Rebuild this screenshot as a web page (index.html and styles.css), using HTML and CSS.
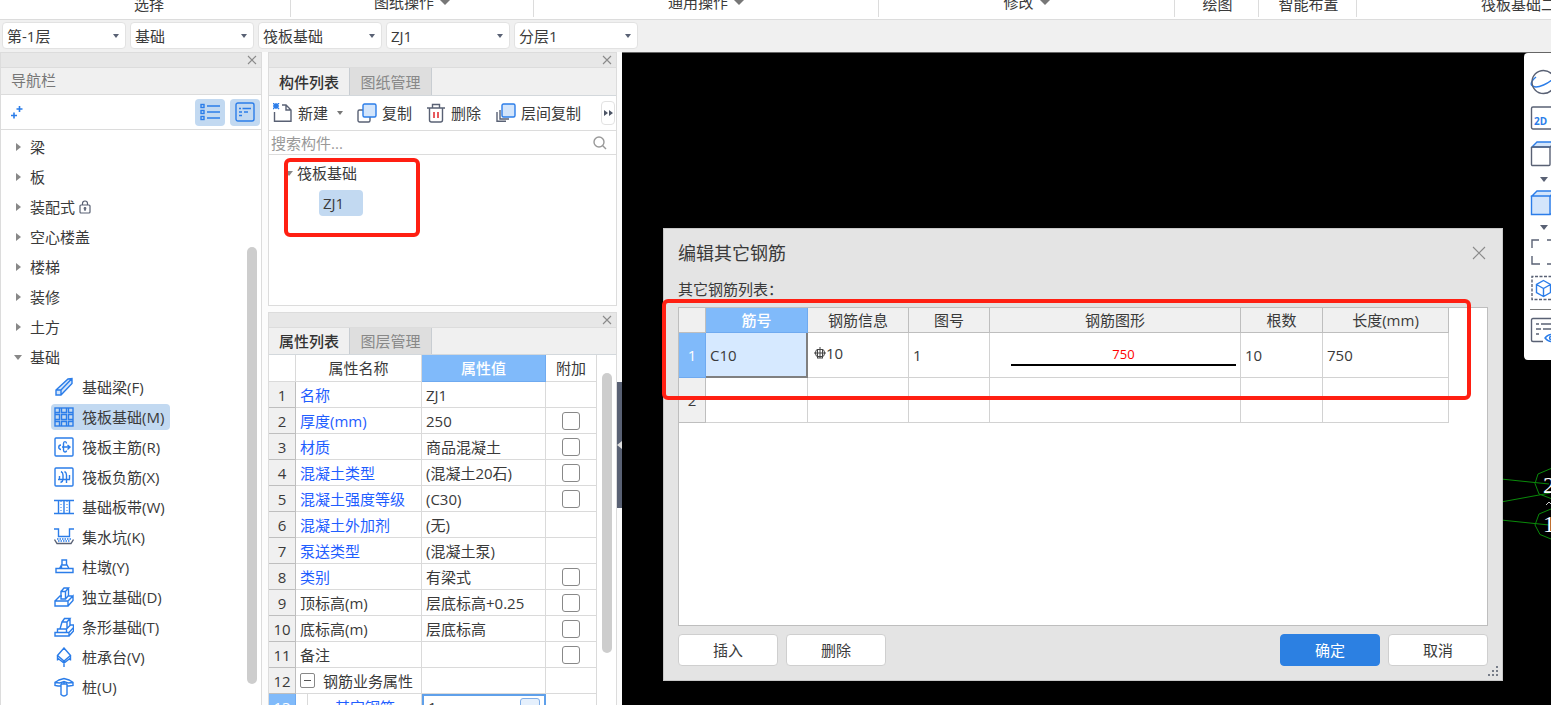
FILE: index.html
```html
<!DOCTYPE html>
<html lang="zh-CN">
<head>
<meta charset="utf-8">
<title>编辑其它钢筋</title>
<link rel="stylesheet" href="styles.css">
</head>
<body>
<header class="ribbon">
  <span class="group g-select">选择</span>
  <span class="group g-sheet up">图纸操作<i class="tri"></i></span>
  <span class="group g-common up">通用操作<i class="tri"></i></span>
  <span class="group g-modify up">修改<i class="tri"></i></span>
  <span class="group g-draw">绘图</span>
  <span class="group g-smart">智能布置</span>
  <span class="group g-last">筏板基础二次编辑</span>
</header>

<div class="context">
  <span class="combo"><select aria-label="楼层"><option>第-1层</option></select></span>
  <span class="combo"><select aria-label="类型"><option>基础</option></select></span>
  <span class="combo"><select aria-label="构件类型"><option>筏板基础</option></select></span>
  <span class="combo"><select aria-label="构件"><option>ZJ1</option></select></span>
  <span class="combo"><select aria-label="分层"><option>分层1</option></select></span>
</div>

<main class="work">
  <aside class="panel nav">
    <div class="strip"><button class="x" aria-label="关闭导航栏"><svg width="10" height="10" viewBox="0 0 10 10"><path d="M1 1l8 8M9 1l-8 8"/></svg></button></div>
    <h2 class="nav-title">导航栏</h2>
    <div class="nav-tools">
      <button class="plain" aria-label="添加"><svg width="12" height="14" viewBox="0 0 12 14" class="ic"><path stroke-width="1.6" d="M8.500 1v6M5.500 4h6M3 7.500v6M0 10.500h6"/></svg></button>
      <span class="grow"></span>
      <button class="toggle" aria-label="列表"><svg width="20" height="18" viewBox="0 0 20 18" class="ic"><path d="M7 3h13M7 9h13M7 15h13"/><rect x="1" y="1.500" width="3" height="3"/><rect x="1" y="7.500" width="3" height="3"/><rect x="1" y="13.500" width="3" height="3"/></svg></button>
      <button class="toggle" aria-label="详情"><svg width="20" height="20" viewBox="0 0 20 20" class="ic"><rect x="1" y="1" width="18" height="18" rx="2"/><path d="M4 6.500h2M7.500 6.500H16M4 10h3M9 10h4M4 13.500h3"/></svg></button>
    </div>
    <ul class="tree">
      <li><button class="node"><i class="caret"></i>梁</button></li>
      <li><button class="node"><i class="caret"></i>板</button></li>
      <li><button class="node"><i class="caret"></i>装配式<svg class="lock" width="12" height="14" viewBox="0 0 12 14"><rect x="1" y="5" width="10" height="8" rx="1"/><path d="M3.500 5V3.500a2.500 2.500 0 0 1 5 0V5M6 9v2"/><circle cx="6" cy="8.500" r=".8"/></svg></button></li>
      <li><button class="node"><i class="caret"></i>空心楼盖</button></li>
      <li><button class="node"><i class="caret"></i>楼梯</button></li>
      <li><button class="node"><i class="caret"></i>装修</button></li>
      <li><button class="node"><i class="caret"></i>土方</button></li>
      <li><button class="node"><i class="caret open"></i>基础</button>
        <ul class="leaves">
          <li><button class="leaf"><svg class="ic" width="20" height="20" viewBox="0 0 20 20"><path class="tint" d="M2 13L14 2l4-.5v5L7 18H2zM2 13h5v5M7 13L18 1.500"/></svg>基础梁(F)</button></li>
          <li><button class="leaf on"><svg class="ic" width="20" height="20" viewBox="0 0 20 20"><rect x="1" y="1" width="18" height="18"/><path d="M1 5.500h4.500V1M7.500 1v4.500h5V1M14.500 1v4.500H19M1 7.500h4.500v5H1M7.500 7.500h5v5h-5zM19 7.500h-4.500v5H19M1 14.500h4.500V19M7.500 19v-4.500h5V19M14.500 19v-4.500H19"/></svg>筏板基础(M)</button></li>
          <li><button class="leaf"><svg class="ic" width="20" height="20" viewBox="0 0 20 20"><rect x="1" y="1" width="18" height="18" rx="1"/><path d="M8 10h8M7 8a2.200 2.200 0 1 0 0 4.500M13.500 8l2.500 2-2.500 2.500M12.500 6.500c0-2.500-3-2.500-3 0V13c0 2.500 3 2.500 3 .5"/></svg>筏板主筋(R)</button></li>
          <li><button class="leaf"><svg class="ic" width="20" height="20" viewBox="0 0 20 20"><rect x="1" y="1" width="18" height="18" rx="1"/><path d="M4 12.500h12M7 4.500q2 1 2 3.500v4.500q0 2-2.500 3M10.500 4.500q2 1 2 3.500v8M5.500 9v3.500M15.500 8v4.500"/></svg>筏板负筋(X)</button></li>
          <li><button class="leaf"><svg class="ic" width="20" height="20" viewBox="0 0 20 20"><path d="M0 3.500h20M0 16.500h20M4.500 3.500v13M10 3.500v13M15.500 3.500v13"/><path d="M7 4v12M13 4v12" stroke-width="1" stroke-dasharray="1 2"/></svg>基础板带(W)</button></li>
          <li><button class="leaf"><svg class="ic" width="20" height="20" viewBox="0 0 20 20"><path d="M0 2h4.500v7.500h11V2H20"/><path d="M3 12h14M4 14h12" stroke-dasharray="1.500 1"/><path d="M.5 12.500L3 16.500h14l2.500-4" stroke="#596174"/></svg>集水坑(K)</button></li>
          <li><button class="leaf"><svg class="ic" width="20" height="20" viewBox="0 0 20 20"><path d="M2 11.500h17v4H2zM5.500 11.500L7.500 8h5.500l2 3.500M8 8V3h4.500v5M7.500 11V9"/></svg>柱墩(Y)</button></li>
          <li><button class="leaf"><svg class="ic" width="20" height="20" viewBox="0 0 20 20"><path d="M1 14h13v5H1zM14 14l5-5v4.500L14 19M1 14l5-5h2M14.500 9H19M7 12V4.500h4.500V12zM7 4.500L10 1h4.500l-3 3.500M14.500 1v7.500L11.500 12"/></svg>独立基础(D)</button></li>
          <li><button class="leaf"><svg class="ic" width="20" height="20" viewBox="0 0 20 20"><path d="M1 15.500h14V19H1zM15 15.500l4.500-5V14L15 19M3.500 15.500V12h9v3.500M12.500 12l4-4h3v2.500M6 12l2-7h5v7M8 5l2.500-3.500H16L13 5M16 1.500V8.500"/></svg>条形基础(T)</button></li>
          <li><button class="leaf"><svg class="ic" width="20" height="20" viewBox="0 0 20 20"><path d="M10 1L3.500 8.500 10 14l6.500-5.500zM3.500 8.500v5M16.500 8.500v5M3.500 11L10 16l6.500-5M10 14v6"/></svg>桩承台(V)</button></li>
          <li><button class="leaf"><svg class="ic" width="20" height="20" viewBox="0 0 20 20"><path d="M1 5.500L5 3l5-1.500L15 3l4 2.500v3L15 9h-2M7 9H4L1 8.500v-3l5 .5 4-1.500 4 1.500 5-.5M7 7v10.500q3 3 6 0V7M10 5v2M7 7h6"/></svg>桩(U)</button></li>
        </ul>
      </li>
    </ul>
    <span class="thumb nav-thumb"></span>
  </aside>

  <div class="middle">
    <section class="panel list-panel">
      <div class="strip"><button class="x" aria-label="关闭构件列表"><svg width="10" height="10" viewBox="0 0 10 10"><path d="M1 1l8 8M9 1l-8 8"/></svg></button></div>
      <div class="tabs"><button class="tab active">构件列表</button><button class="tab">图纸管理</button></div>
      <div class="tools">
        <button class="tool t-new"><svg width="20" height="20" viewBox="0 0 20 20"><path class="ink" d="M1.500 9v9.300h16.500V7l-5-5H9M13 2v5h5"/><path class="ic" d="M0 0l6 6M6 0L0 6M3 0v6M0 3h6"/></svg>新建<i class="tri small"></i></button>
        <button class="tool t-copy"><svg width="20" height="20" viewBox="0 0 20 20"><rect class="ink" x="1" y="7" width="12" height="12" rx="1.500"/><rect class="ic tint" x="6" y="1" width="13" height="13" rx="1.500"/></svg>复制</button>
        <button class="tool t-delete"><svg width="18" height="20" viewBox="0 0 18 20"><path class="ink" d="M0 5h18M2.500 5v12q0 2 2 2h9q2 0 2-2V5M5.500 5V1.500h7V5"/><path d="M7 9v6M11 9v6" stroke="#e0242a" stroke-width="1.500"/></svg>删除</button>
        <button class="tool t-floor"><svg width="20" height="20" viewBox="0 0 20 20"><path class="ink" d="M4 7v9h9M1 9v9.300h9"/><rect class="ic tint" x="6" y="1" width="13" height="13" rx="1.500"/></svg>层间复制</button>
        <button class="more" aria-label="更多"><svg width="9" height="6" viewBox="0 0 9 6"><path d="M0 0l4 3-4 3zM5 0l4 3-4 3z" fill="#4d5566"/></svg></button>
      </div>
      <label class="search"><input type="text" placeholder="搜索构件..." aria-label="搜索构件"><svg width="14" height="14" viewBox="0 0 14 14"><circle cx="6" cy="6" r="5"/><path d="M9.500 9.500L13 13"/></svg></label>
      <ul class="parts">
        <li><button class="part"><i class="caret open tiny"></i>筏板基础</button></li>
        <li><button class="part chosen">ZJ1</button></li>
      </ul>
      <span class="mark mark-part"></span>
    </section>

    <section class="panel prop-panel">
      <div class="strip"><button class="x" aria-label="关闭属性列表"><svg width="10" height="10" viewBox="0 0 10 10"><path d="M1 1l8 8M9 1l-8 8"/></svg></button></div>
      <div class="tabs"><button class="tab active">属性列表</button><button class="tab">图层管理</button></div>
      <table class="props">
        <colgroup><col class="p-no"><col class="p-name"><col class="p-value"><col class="p-extra"></colgroup>
        <thead><tr><th></th><th>属性名称</th><th class="hot">属性值</th><th>附加</th></tr></thead>
        <tbody>
          <tr><th>1</th><td class="key">名称</td><td>ZJ1</td><td></td></tr>
          <tr><th>2</th><td class="key">厚度(mm)</td><td>250</td><td class="tick"><input type="checkbox" aria-label="附加 厚度"></td></tr>
          <tr><th>3</th><td class="key">材质</td><td>商品混凝土</td><td class="tick"><input type="checkbox" aria-label="附加 材质"></td></tr>
          <tr><th>4</th><td class="key">混凝土类型</td><td>(混凝土20石)</td><td class="tick"><input type="checkbox" aria-label="附加 混凝土类型"></td></tr>
          <tr><th>5</th><td class="key">混凝土强度等级</td><td>(C30)</td><td class="tick"><input type="checkbox" aria-label="附加 混凝土强度等级"></td></tr>
          <tr><th>6</th><td class="key">混凝土外加剂</td><td>(无)</td><td></td></tr>
          <tr><th>7</th><td class="key">泵送类型</td><td>(混凝土泵)</td><td></td></tr>
          <tr><th>8</th><td class="key">类别</td><td>有梁式</td><td class="tick"><input type="checkbox" aria-label="附加 类别"></td></tr>
          <tr><th>9</th><td>顶标高(m)</td><td>层底标高+0.25</td><td class="tick"><input type="checkbox" aria-label="附加 顶标高"></td></tr>
          <tr><th>10</th><td>底标高(m)</td><td>层底标高</td><td class="tick"><input type="checkbox" aria-label="附加 底标高"></td></tr>
          <tr><th>11</th><td>备注</td><td></td><td class="tick"><input type="checkbox" aria-label="附加 备注"></td></tr>
          <tr><th>12</th><td><span class="fold-row"><button class="fold" aria-label="折叠"></button>钢筋业务属性</span></td><td></td><td></td></tr>
          <tr><th class="hot">13</th><td class="key sub">其它钢筋</td><td class="editing"><span class="edit-row">1<button class="dots">…</button></span></td><td></td></tr>
        </tbody>
      </table>
      <span class="thumb prop-thumb"></span>
    </section>
    <button class="handle" aria-label="收起面板"></button>
  </div>

  <section class="canvas">
    <svg class="axes" width="50" height="80" viewBox="0 0 50 80">
      <g fill="none" stroke="#0a8a0a"><path d="M0 15l48 5M0 38l49-9M0 56l48 5"/><path d="M50 4.500L37 10l-3 9.500L38 30l12 4.500M50 45l-12 5-4 11 5 9.500 11 4.500"/></g>
      <g fill="#fff"><text x="42" y="29">2</text><text x="42" y="68">1</text></g>
      <path d="M45 41l3-3 3 3" fill="none" stroke="#ccc"/>
    </svg>

    <nav class="viewbar">
      <button class="vb" aria-label="动态观察"><svg width="26" height="26" viewBox="0 0 26 26"><path class="ic" d="M6 8q-6 5-4.500 8 3 4 12 0T26 6"/><circle class="ink" cx="13.500" cy="13" r="11.500"/></svg></button>
      <button class="vb" aria-label="二维"><svg width="26" height="26" viewBox="0 0 26 26"><rect class="ink" x="1.500" y="2" width="26" height="22" rx="1.500"/><text x="4" y="20">2D</text></svg></button>
      <button class="vb" aria-label="三维"><svg width="26" height="26" viewBox="0 0 26 26"><path class="ic tint" d="M2 6l5-5h20v5z"/><rect class="ink" x="1.500" y="6" width="18.500" height="18.500" rx="1"/><path class="ink" d="M20 6l6-5"/></svg></button>
      <button class="vb slim" aria-label="更多三维视图"><i class="tri dark"></i></button>
      <button class="vb mid" aria-label="实体"><svg width="26" height="26" viewBox="0 0 26 26"><path class="ic tint" d="M2 6l5-5h20v5zM1.500 6H20v18.500H1.500zM20 6l6-5v23h-6z"/></svg></button>
      <button class="vb slim" aria-label="更多显示方式"><i class="tri dark"></i></button>
      <button class="vb" aria-label="全屏"><svg width="26" height="26" viewBox="0 0 26 26"><path class="ink" d="M9 1H2v8M2 17v8h8M17 1h9M17 25h9"/></svg></button>
      <button class="vb" aria-label="局部三维"><svg width="26" height="26" viewBox="0 0 26 26"><path class="ink" stroke-dasharray="3 1.500" d="M26 1.500H2v23h24"/><path class="ic" d="M13.500 5.500l7 4v8l-7 4-7-4v-8zM6.500 9.500l7 4 7-4M13.500 13.500v8"/></svg></button>
      <hr>
      <button class="vb" aria-label="显示设置"><svg width="26" height="26" viewBox="0 0 26 26"><path class="ink" d="M27 1.500H3Q1.500 1.500 1.500 3v20q0 1.500 1.500 1.500h10M6 7h3M11 7h12M6 12h5M13 12h8M6 17h3"/><path class="ic" d="M15 21q6-7 12 0-6 7-12 0z"/><circle class="ic" cx="21" cy="21" r="1.500"/></svg></button>
    </nav>

    <div class="dialog" role="dialog" aria-labelledby="dlg-title">
      <div class="dlg-head"><h1 id="dlg-title">编辑其它钢筋</h1><button class="x" aria-label="关闭"><svg width="14" height="14" viewBox="0 0 14 14"><path d="M1 1l12 12M13 1L1 13"/></svg></button></div>
      <p class="dlg-label">其它钢筋列表：</p>
      <div class="sheet">
        <table class="bars">
          <colgroup><col class="b-no"><col class="b-id"><col class="b-info"><col class="b-fig"><col class="b-shape"><col class="b-count"><col class="b-len"></colgroup>
          <thead><tr><th></th><th class="hot">筋号</th><th>钢筋信息</th><th>图号</th><th>钢筋图形</th><th>根数</th><th>长度(mm)</th></tr></thead>
          <tbody>
            <tr><th class="hot">1</th><td class="cell-on">C10</td><td><span class="rebar"><svg width="12" height="12" viewBox="0 0 12 12"><path d="M6 0v11M3.500 2v9M8.500 2v9M0 6h12M3 11h6M3.500 2.500h5q2 0 2 3.500t-2 3.500h-5q-2 0-2-3.500t2-3.500z"/></svg>10</span></td><td>1</td><td class="shape"><span class="bar">750</span></td><td>10</td><td>750</td></tr>
            <tr><th>2</th><td></td><td></td><td></td><td></td><td></td><td></td></tr>
          </tbody>
        </table>
      </div>
      <div class="dlg-foot">
        <button class="btn">插入</button><button class="btn">删除</button>
        <span class="grow"></span>
        <button class="btn primary">确定</button><button class="btn">取消</button>
      </div>
      <svg class="grip" width="11" height="11" viewBox="0 0 11 11"><path d="M8 0h2v2H8zM4 4h2v2H4zM8 4h2v2H8zM0 8h2v2H0zM4 8h2v2H4zM8 8h2v2H8z"/></svg>
      <span class="mark mark-bars"></span>
    </div>
  </section>
</main>
</body>
</html>
```
FILE: styles.css
```css
* { box-sizing: border-box; }

body {
  margin: 0;
  height: 100vh;
  display: flex;
  flex-direction: column;
  overflow: hidden;
  background: #fcfcfc;
  color: #3a3a3a;
  font: 15px/20px "Open Sans", "Noto Sans CJK SC", sans-serif;
}

button, input, select { font: inherit; color: inherit; }
button { padding: 0; border: 0; background: none; }
ul { margin: 0; padding: 0; list-style: none; }
h1, h2, p { margin: 0; font-weight: normal; }
svg { display: block; flex: none; }
table { border-collapse: separate; border-spacing: 0; table-layout: fixed; }
.grow { flex: 1; }
.ic { fill: none; stroke: #2b7de9; stroke-width: 1.4; }
.ink { fill: none; stroke: #596174; stroke-width: 1.4; }
.tint { fill: #d3e5fb; }

/* Ribbon captions */
.ribbon {
  display: flex;
  flex: 0 0 19px;
  overflow: hidden;
  background: #fff;
}
.group {
  height: 17px;
  flex: none;
  display: flex;
  justify-content: center;
  align-items: flex-end;
  gap: 6px;
  padding-bottom: 3px;
  border-right: 1px solid #dcdcdc;
  white-space: nowrap;
}
.group.up { padding-bottom: 5px; }
.g-select { width: 291px; padding-left: 8px; }
.g-sheet { width: 243px; }
.g-common { width: 345px; }
.g-modify { width: 296px; }
.g-draw { width: 84px; padding-left: 2px; }
.g-smart { width: 98px; padding-left: 2px; }
.g-last { flex: 1; justify-content: flex-start; padding-left: 124px; border: 0; overflow: hidden; }
.tri {
  border: 5px solid transparent;
  border-top-color: #777;
  border-bottom: 0;
  margin-bottom: 7px;
}
.tri.small { border-width: 4px 3px 0; margin: 0 0 0 4px; }
.tri.dark { border-width: 5px 4px 0; border-top-color: #596174; margin: 0; }

/* Context selectors */
.context {
  flex: 0 0 33px;
  display: flex;
  gap: 4px;
  padding: 2px;
  background: #f0f0f0;
  border-top: 1px solid #dcdcdc;
}
.combo { position: relative; width: 124px; height: 27px; }
.combo select {
  appearance: none;
  width: 100%;
  height: 27px;
  padding: 0 4px;
  border: 1px solid #e2e2e2;
  border-radius: 4px;
  background: #fff;
}
.combo::after {
  content: "";
  position: absolute;
  right: 7px;
  top: 12px;
  border: 3px solid transparent;
  border-top: 4px solid #596174;
  border-bottom: 0;
}

/* Docked panels */
.work { flex: 1; min-height: 0; display: flex; }
.panel { position: relative; border: 1px solid #dcdcdc; background: #fff; overflow: hidden; }
.strip {
  display: flex;
  justify-content: flex-end;
  align-items: center;
  height: 15px;
  padding-right: 4px;
  background: #e7e7e7;
  border-bottom: 1px solid #dcdcdc;
}
.x svg { fill: none; stroke: #8a8a8a; stroke-width: 1.1; }
.thumb { position: absolute; width: 10px; border-radius: 5px; background: #cdcdcd; }

.nav { flex: 0 0 262px; border-bottom: 0; }
.nav-title {
  height: 27px;
  padding: 1px 10px;
  font-size: 15px;
  line-height: 22px;
  color: #777;
  background: #f0f0f0;
  border-bottom: 1px solid #dcdcdc;
}
.nav-tools {
  display: flex;
  align-items: center;
  gap: 5px;
  height: 35px;
  padding: 0 1px 0 10px;
  border-bottom: 1px solid #dcdcdc;
}
.toggle {
  display: flex;
  align-items: center;
  justify-content: center;
  width: 30px;
  height: 27px;
  border-radius: 4px;
  background: #c2d9f1;
}
.tree { padding-top: 2px; }
.node { display: flex; align-items: center; height: 30px; padding-left: 15px; }
.caret {
  width: 14px;
  height: 8px;
  background: linear-gradient(#888, #888) no-repeat 0 0 / 5px 8px;
  clip-path: polygon(0 0, 5px 4px, 0 8px);
}
.caret.open { clip-path: polygon(0 2px, 8px 2px, 4px 7px); background-size: 8px 8px; margin-left: -2px; margin-right: 2px; }
.lock { margin-left: 4px; fill: none; stroke: #596174; stroke-width: 1.2; }
.leaves li { padding: 2px 0 2px 50px; }
.leaf {
  display: flex;
  align-items: center;
  gap: 8px;
  height: 26px;
  padding: 0 6px 0 3px;
  border-radius: 4px;
}
.leaf.on { background: #c2d9f1; }
.nav-thumb { right: 4px; top: 194px; height: 437px; }

.middle { position: relative; flex: 0 0 360px; padding: 0 5px 0 6px; display: flex; flex-direction: column; gap: 6px; }
.list-panel { flex: 0 0 254px; }
.prop-panel { flex: 1; min-height: 0; border-bottom: 0; }
.tabs { display: flex; height: 28px; background: #f0f0f0; border-bottom: 1px solid #d3d8dc; }
.prop-panel .tabs { height: 27px; }
.tab {
  width: 82px;
  background: #dedede;
  border-right: 1px solid #c8cdd2;
  color: #888;
}
.tab.active { width: 81px; background: #f0f0f0; color: #333; font-weight: 500; }
.tools {
  display: flex;
  align-items: center;
  height: 35px;
  padding: 0 1px 0 4px;
  border-bottom: 1px solid #dcdcdc;
}
.tool { display: flex; align-items: center; gap: 5px; white-space: nowrap; margin-right: 15px; }
.t-new { margin-right: 14px; }
.t-delete { gap: 6px; }
.t-floor { margin-right: auto; }
.more {
  display: flex;
  align-items: center;
  justify-content: center;
  width: 14px;
  height: 24px;
  border: 1px solid #e2e2e2;
  border-radius: 4px;
}
.search { display: flex; align-items: center; height: 24px; padding: 0 9px 0 2px; border-bottom: 1px solid #dcdcdc; }
.search input { flex: 1; min-width: 0; height: 22px; padding: 0; border: 0; outline: 0; background: none; }
.search input::placeholder { color: #999; opacity: 1; }
.search svg { fill: none; stroke: #999; stroke-width: 1.4; }
.parts { padding: 3px 0 0 20px; }
.part { display: flex; align-items: center; height: 30px; }
.caret.tiny { width: 12px; margin: 0; }
.part.chosen {
  width: 44px;
  height: 26px;
  margin: 2px 0 2px 30px;
  padding-left: 4px;
  border-radius: 4px;
  background: #c2d9f1;
}
.part .caret { margin-left: -4px; }
.mark { position: absolute; border: 4px solid #ff1f12; border-radius: 6px; pointer-events: none; }
.mark-part { left: 15px; top: 105px; width: 136px; height: 79px; }

/* Property grid */
.props { width: 328px; line-height: 20px; }
.p-no { width: 27px; }
.p-name { width: 126px; }
.p-value { width: 124px; }
.p-extra { width: 51px; }
.props th, .props td {
  height: 26px;
  padding: 0 4px;
  border: solid #dadada;
  border-width: 0 1px 1px 0;
  font-weight: normal;
  text-align: left;
  white-space: nowrap;
}
.props thead th { height: 27px; text-align: center; }
.props tbody th { padding: 0; text-align: center; background: #f0f0f0; border-color: #bebebe; }
.props .key { color: #1f5eff; }
.props .tick { text-align: center; }
.props tbody .hot, .props .hot { background: #80bafa; color: #fff; font-weight: 500; border-color: #6faaf0; }
.tick input {
  appearance: none;
  display: block;
  width: 18px;
  height: 18px;
  margin: 0 auto;
  border: 1px solid #888;
  border-radius: 3px;
  background: #fff;
}
.fold-row { display: flex; align-items: center; gap: 8px; }
.fold {
  width: 15px;
  height: 15px;
  border: 1px solid #888;
  border-radius: 2px;
  background: linear-gradient(#555, #555) no-repeat center / 7px 1px;
}
.props .sub { padding-left: 39px; background: linear-gradient(#dadada, #dadada) no-repeat 11px 0 / 1px 100%; }
.props .editing { border: 2px solid #5fa0ea; padding: 0 4px; }
.edit-row { display: flex; justify-content: space-between; align-items: center; }
.dots { width: 20px; height: 18px; line-height: 14px; border: 1px solid #80aee8; border-radius: 3px; background: #e6f0fc; }
.prop-thumb { right: 4px; top: 60px; height: 280px; }
.handle {
  position: absolute;
  right: 0;
  top: 330px;
  width: 5px;
  height: 126px;
  background: #596174;
}
.handle::after {
  content: "";
  display: block;
  width: 5px;
  height: 8px;
  background: #ddd;
  clip-path: polygon(5px 0, 0 4px, 5px 8px);
}

/* Model view */
.canvas { position: relative; flex: 1; min-width: 0; background: #000; border-top: 1px solid #666; overflow: hidden; }
.axes { position: absolute; right: 0; top: 411px; font: 24px "Liberation Serif", serif; }
.viewbar {
  position: absolute;
  right: 0;
  top: 0;
  width: 27px;
  padding: 11px 0 12px 6px;
  overflow: hidden;
  background: #fff;
  border-radius: 4px 0 0 4px;
}
.vb { display: flex; align-items: center; height: 36px; }
.vb.mid { height: 34px; }
.vb.slim { height: 14px; padding-left: 10px; }
.vb text { font: bold 10px "Open Sans", sans-serif; fill: #2b7de9; }
.viewbar hr { margin: 3px 0 2px; border: 0; border-top: 1px solid #777; }

/* Dialog */
.dialog {
  position: absolute;
  inset: 175px 48px 24px 41px;
  display: flex;
  flex-direction: column;
  padding: 0 14px 14px;
  background: #e4e4e4;
  border: 1px solid #c8c8c8;
}
.dlg-head { display: flex; align-items: center; justify-content: space-between; height: 48px; padding-right: 2px; }
.dlg-head h1 { font-size: 18px; line-height: 24px; }
.dlg-label { height: 30px; line-height: 24px; }
.sheet { flex: 1; min-height: 0; background: #fff; border: 1px solid #bebebe; }
.bars { width: 770px; }
.b-no { width: 27px; }
.b-id { width: 102px; }
.b-info { width: 101px; }
.b-fig { width: 81px; }
.b-shape { width: 251px; }
.b-count { width: 82px; }
.b-len { width: 126px; }
.bars th, .bars td {
  height: 45px;
  padding: 0 4px;
  border: solid #d2d2d2;
  border-width: 0 1px 1px 0;
  font-weight: normal;
  text-align: left;
}
.bars th { background: #f0f0f0; border-color: #bebebe; text-align: center; }
.bars thead th { height: 25px; }
.bars .hot { background: #80bafa; border-color: #6faaf0; color: #fff; font-weight: 500; }
.bars .cell-on { background: #d6e9ff; border: solid #808080; border-width: 0 2px 2px 0; }
.rebar { display: flex; align-items: center; padding: 0 0 4px 2px; }
.rebar svg { fill: none; stroke: #444; }
.bars .shape { padding: 0 4px 0 21px; }
.bar { display: block; border-bottom: 2px solid #000; color: #f00; font-size: 13px; text-align: center; }
.dlg-foot { display: flex; gap: 8px; padding-top: 8px; }
.btn {
  width: 100px;
  height: 32px;
  border: 1px solid #cfcfcf;
  border-radius: 4px;
  background: #fff;
}
.btn.primary { background: #2c80e2; border-color: #2c80e2; color: #fff; }
.grip { position: absolute; right: 3px; bottom: 3px; fill: #777d88; }
.mark-bars { left: -2px; right: 31px; top: 70px; height: 101px; }
```
